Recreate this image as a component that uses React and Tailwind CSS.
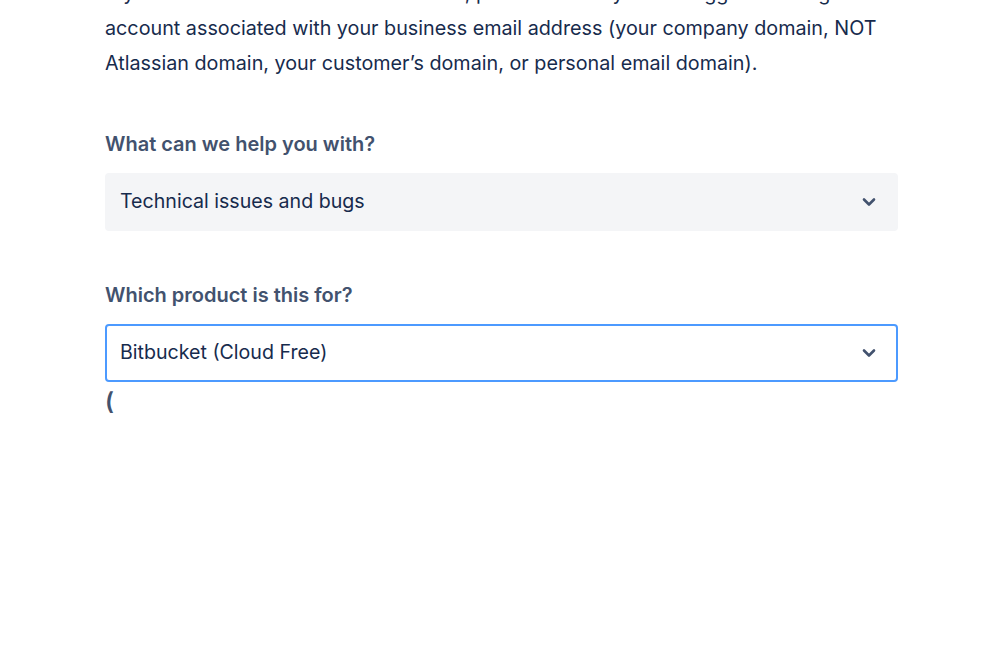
import React from 'react';

const Chevron = () => (
  <svg width="14" height="10" viewBox="0 0 14 10" className="shrink-0">
    <path d="M2 2.5l5 5 5-5" fill="none" stroke="#42526E" strokeWidth="2.6" strokeLinecap="round" strokeLinejoin="round" />
  </svg>
);

const SelectField = ({ label, value, focused }) => (
  <div className="flex flex-col">
    <label className="text-[20px] font-semibold text-[#42526E] leading-[24px] mb-[17px]">{label}</label>
    <div
      className={`flex items-center justify-between h-[58px] rounded-[4px] border-2 pl-[13px] pr-[20px] ${
        focused ? 'bg-white border-[#4C9AFF] h-[57px]' : 'bg-[#F4F5F7] border-[#F4F5F7]'
      }`}
    >
      <span className="text-[19.6px] text-[#172B4D]">{value}</span>
      <Chevron />
    </div>
  </div>
);

const lines = [
  'If you are an Atlassian Solution Partner, please ensure you are logged in using the',
  'account associated with your business email address (your company domain, NOT',
  'Atlassian domain, your customer’s domain, or personal email domain).',
];

export default function App() {
  return (
    <div className="min-h-screen bg-white font-['Inter',sans-serif] overflow-hidden">
      <div className="max-w-[793px] ml-[105px] -mt-[24px]">
        <p className="text-[19.75px] leading-[35px] text-[#172B4D]">
          {lines.map((l) => (
            <span key={l} className="block whitespace-nowrap">{l}</span>
          ))}
        </p>

        <div className="mt-[51px]">
          <SelectField label="What can we help you with?" value="Technical issues and bugs" />
        </div>

        <div className="mt-[52px]">
          <SelectField label="Which product is this for?" value="Bitbucket (Cloud Free)" focused />
        </div>

        <div className="mt-[5px] text-[24px] font-semibold text-[#42526E] leading-[30px]">(</div>
      </div>
    </div>
  );
}
